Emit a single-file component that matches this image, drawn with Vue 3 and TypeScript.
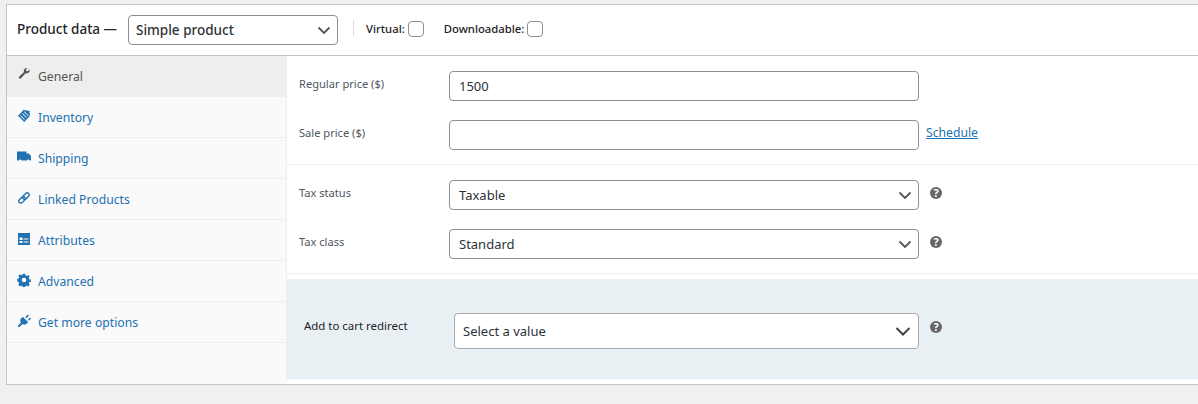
<script setup lang="ts">
interface Tab {
  label: string
  icon: string
  active?: boolean
}

const tabs: Tab[] = [
  { label: 'General', icon: 'wrench', active: true },
  { label: 'Inventory', icon: 'tag' },
  { label: 'Shipping', icon: 'truck' },
  { label: 'Linked Products', icon: 'link' },
  { label: 'Attributes', icon: 'card' },
  { label: 'Advanced', icon: 'gear' },
  { label: 'Get more options', icon: 'plug' }
]
</script>

<template>
  <div class="page">
    <div class="box">
      <header class="box-head">
        <span class="head-title">Product data —</span>
        <div class="select head-select">
          <span>Simple product</span>
          <svg class="chevron" width="14" height="14" viewBox="0 0 14 14"><path d="M1.500 4.500l5.500 5.500 5.500-5.500" fill="none" stroke="#50575e" stroke-width="1.800" /></svg>
        </div>
        <span class="head-sep"></span>
        <label class="check-label">Virtual:<span class="checkbox"></span></label>
        <label class="check-label downloadable">Downloadable:<span class="checkbox"></span></label>
      </header>

      <div class="box-body">
        <ul class="tabs">
          <li v-for="tab in tabs" :key="tab.label" class="tab" :class="{ 'tab--active': tab.active }">
            <svg class="tab-icon" width="14" height="14" viewBox="0 0 14 14">
              <path v-if="tab.icon === 'wrench'" d="M12.500 2.500a3 3 0 0 1-3.900 3.700L4 11.300a1.200 1.200 0 0 1-1.800-1.700L7 5.100A3 3 0 0 1 10.500 1L8.900 2.600l.3 1.400 1.500 .3z" />
              <path v-else-if="tab.icon === 'tag'" fill-rule="evenodd" d="M6.800 .8l1.500 .7 1.200-.6 1 1 1.200-.4 1 1-.4 1.200 .9 1-.7 1.300.4 1L7.200 13 1 6.800zM3 6.800l4.200 4 .6-.6-4.200-4zm2-2l4.200 4 .6-.6-4.200-4zm2-1.800l4 4 .6-.6-4-4z" />
              <path v-else-if="tab.icon === 'truck'" d="M0 1.500h9.500v2h2.300L14 6v4.500h-1.200a1.400 1.400 0 0 0-2.700 0H4.600a1.400 1.400 0 0 0-2.700 0H0z" />
              <g v-else-if="tab.icon === 'link'" class="link-icon" transform="rotate(-45 7 7)">
                <rect x="0.500" y="5" width="7.500" height="4" rx="2" />
                <rect x="6" y="5" width="7.500" height="4" rx="2" />
              </g>
              <path v-else-if="tab.icon === 'card'" fill-rule="evenodd" d="M1 1h12v12H1zM2.500 5.500v2.500h3V5.500zM2.500 9v2h3V9zM6.500 6.500v1h5v-1zM6.500 9.500v1h5v-1z" />
              <path v-else-if="tab.icon === 'gear'" fill-rule="evenodd" d="M5.800 .8h2.400l.3 1.700 1.100 .5 1.500-1 1.600 1.600-1 1.500 .5 1.100 1.600 .3v2.400l-1.600 .3-.5 1.100 1 1.500-1.600 1.600-1.500-1-1.100 .5-.3 1.700H5.800l-.3-1.700-1.100-.5-1.500 1-1.600-1.600 1-1.500-.5-1.100L.2 8.200V5.800l1.600-.3 .5-1.100-1-1.500 1.600-1.600 1.500 1 1.100-.5zM7 4.700a2.300 2.300 0 1 0 0 4.600 2.300 2.300 0 0 0 0-4.600z" />
              <path v-else d="M5.800 2.800l5.400 5.400-1.400 1.400a3.200 3.200 0 0 1-4.200 .3L2.500 12.900H1v-1.500l3-3a3.200 3.200 0 0 1 .3-4.200zM8.300 3.100l2.600-2.500 1 1-2.500 2.600zM10.900 5.700l2.200-2.200 1 1-2.200 2.200z" />
            </svg>
            <span>{{ tab.label }}</span>
          </li>
        </ul>

        <div class="panel">
          <section class="group group--pricing">
            <div class="field">
              <span class="field-label">Regular price ($)</span>
              <div class="input">1500</div>
            </div>
            <div class="field">
              <span class="field-label">Sale price ($)</span>
              <div class="input"></div>
              <a class="schedule" href="#">Schedule</a>
            </div>
          </section>

          <section class="group group--tax">
            <div class="field">
              <span class="field-label">Tax status</span>
              <div class="select field-select">
                <span>Taxable</span>
                <svg class="chevron" width="14" height="14" viewBox="0 0 14 14"><path d="M1.500 4.500l5.500 5.500 5.500-5.500" fill="none" stroke="#50575e" stroke-width="1.800" /></svg>
              </div>
              <span class="help">?</span>
            </div>
            <div class="field">
              <span class="field-label">Tax class</span>
              <div class="select field-select">
                <span>Standard</span>
                <svg class="chevron" width="14" height="14" viewBox="0 0 14 14"><path d="M1.500 4.500l5.500 5.500 5.500-5.500" fill="none" stroke="#50575e" stroke-width="1.800" /></svg>
              </div>
              <span class="help">?</span>
            </div>
          </section>

          <section class="redirect">
            <span class="redirect-label">Add to cart redirect</span>
            <div class="select redirect-select">
              <span>Select a value</span>
              <svg class="chevron" width="16" height="16" viewBox="0 0 16 16"><path d="M1.500 5l6.500 6.500L14.500 5" fill="none" stroke="#444" stroke-width="2" /></svg>
            </div>
            <span class="help help--redirect">?</span>
          </section>
        </div>
      </div>
    </div>
  </div>
</template>

<style>
html,
body {
  margin: 0;
  background: #f0f0f1;
}
</style>

<style scoped>
.page {
  width: 1198px;
  height: 404px;
  box-sizing: border-box;
  padding: 4px 0 0 6px;
  overflow: hidden;
  font-family: "Noto Sans", "Open Sans", sans-serif;
  font-size: 12px;
  color: #3c434a;
}

.box {
  width: 1192px;
  height: 381px;
  box-sizing: border-box;
  display: flex;
  flex-direction: column;
  background: #fff;
  border: 1px solid #c3c4c7;
  border-right: none;
}

.box-head {
  flex: none;
  height: 51px;
  box-sizing: border-box;
  display: flex;
  align-items: center;
  padding-left: 10px;
  border-bottom: 1px solid #c3c4c7;
  color: #1d2327;
}

.head-title {
  flex: none;
  width: 111px;
  padding-bottom: 3px;
  font-size: 13.500px;
  font-weight: 500;
}

.select,
.input {
  box-sizing: border-box;
  display: flex;
  align-items: center;
  justify-content: space-between;
  background: #fff;
  border: 1px solid #8c8f94;
  border-radius: 4px;
  font-size: 13px;
  color: #2c3338;
}

.head-select {
  flex: none;
  width: 210px;
  height: 30px;
  padding: 0 6px 0 7px;
  font-size: 13.500px;
  font-weight: 500;
}

.head-sep {
  width: 1px;
  height: 16px;
  margin: 0 12px 4px 15px;
  background: #dcdcde;
}

.check-label {
  display: flex;
  align-items: center;
  margin-bottom: 3px;
  font-size: 11.300px;
  font-weight: 500;
}

.downloadable {
  margin-left: 20px;
}

.checkbox {
  width: 16px;
  height: 16px;
  box-sizing: border-box;
  margin-left: 3px;
  border: 1px solid #8c8f94;
  border-radius: 4px;
  background: #fff;
}

.box-body {
  flex: 1;
  display: flex;
  min-height: 0;
}

.tabs {
  flex: none;
  width: 280px;
  box-sizing: border-box;
  margin: 0;
  padding: 0;
  list-style: none;
  background: #fafafa;
  border-right: 1px solid #eee;
}

.tab {
  height: 41px;
  box-sizing: border-box;
  display: flex;
  align-items: center;
  gap: 7px;
  padding: 1px 0 0 10px;
  border-bottom: 1px solid #eee;
  font-size: 12.200px;
  color: #2271b1;
}

.tab-icon {
  flex: none;
  margin-top: -4px;
  fill: #2271b1;
}

.link-icon {
  fill: none;
  stroke: #2271b1;
  stroke-width: 1.400;
}

.tab--active {
  padding: 0 0 1px 10px;
  background: #eee;
  color: #555;
  border-bottom: none;
}

.tab--active .tab-icon {
  fill: #555;
}

.panel {
  flex: 1;
  min-width: 0;
}

.group {
  box-sizing: border-box;
  display: flex;
  flex-direction: column;
  gap: 19px;
  padding: 15px 0 14px 12px;
  border-bottom: 1px solid #eee;
}

.field {
  display: flex;
  align-items: center;
  height: 30px;
}

.field-label {
  width: 150px;
  padding-bottom: 6px;
  font-size: 11.100px;
  color: #50575e;
}

.input {
  width: 470px;
  height: 30px;
  padding: 0 9px;
}

.field-select {
  width: 470px;
  height: 30px;
  padding: 0 6px 0 9px;
}

.schedule {
  margin-left: 7px;
  padding-bottom: 5px;
  font-size: 12.200px;
  color: #2271b1;
}

.help {
  width: 12px;
  height: 12px;
  margin: 0 0 5px 11px;
  border-radius: 50%;
  background: #666;
  color: #fff;
  font-size: 11px;
  font-weight: 700;
  line-height: 12px;
  text-align: center;
}

.help--redirect {
  margin-bottom: 9px;
}

.redirect {
  height: 100px;
  box-sizing: border-box;
  display: flex;
  align-items: center;
  margin-top: 5px;
  padding: 4px 0 0 17px;
  background: #e9f0f4;
}

.redirect-label {
  width: 150px;
  padding-bottom: 12px;
  font-size: 11.450px;
  color: #1d2327;
}

.redirect-select {
  width: 465px;
  height: 36px;
  padding: 0 7px 0 8px;
  border-color: #a7aaad;
}
</style>
